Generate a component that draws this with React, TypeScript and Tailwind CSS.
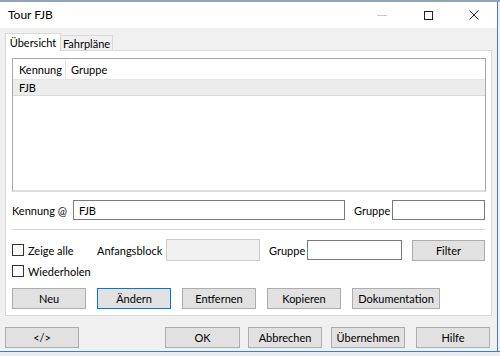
import React from "react";

const font = { fontFamily: 'Lato, "Noto Sans", Arial, sans-serif' };

function Btn({ label, className = "", focused = false }: { label: string; className?: string; focused?: boolean }) {
  return (
    <div
      className={`flex h-[21px] shrink-0 items-center justify-center whitespace-nowrap border bg-[#e1e1e1] text-[11px] leading-none text-black ${
        focused ? "border-[#0078d7]" : "border-[#adadad]"
      } ${className}`}
    >
      {label}
    </div>
  );
}

function Check({ label }: { label: string }) {
  return (
    <div className="flex items-center gap-[4px] whitespace-nowrap">
      <div className="h-[12px] w-[12px] shrink-0 border border-[#333] bg-white" />
      <span className="text-[11px] leading-none">{label}</span>
    </div>
  );
}

export default function App() {
  return (
    <div style={font} className="flex h-[356px] w-[500px] flex-col overflow-hidden whitespace-nowrap bg-[#f0f0f0] text-[11px] text-black">
      <div className="h-[2px] bg-[#8ea3bd]" />
      <div className="flex flex-1 flex-row">
        <div className="flex w-[497px] flex-col">
          {/* title bar */}
          <div className="flex h-[26px] items-center bg-white pl-[8px]">
            <span className="text-[12px] leading-none">Tour FJB</span>
            <div className="ml-auto flex h-full items-center">
              <div className="flex w-[46px] items-center justify-center">
                <div className="h-px w-[10px] bg-[#c8c8c8]" />
              </div>
              <div className="flex w-[46px] items-center justify-center">
                <div className="h-[9px] w-[9px] border border-[#222]" />
              </div>
              <div className="flex w-[46px] items-center justify-center">
                <svg width="10" height="10" viewBox="0 0 10 10">
                  <path d="M0.5 0.5 L9.5 9.5 M9.5 0.5 L0.5 9.5" stroke="#222" strokeWidth="1" />
                </svg>
              </div>
            </div>
          </div>

          {/* body */}
          <div className="flex flex-1 flex-col px-[5px] pt-[5px]">
            {/* tabs */}
            <div className="flex h-[17px] items-end">
              <div className="z-10 -mb-px flex h-[18px] w-[56px] shrink-0 items-center justify-center border border-b-0 border-[#d9d9d9] bg-white leading-none">
                Übersicht
              </div>
              <div className="flex h-[15px] w-[52px] shrink-0 items-center justify-center border border-b-0 border-l-0 border-[#d9d9d9] bg-[#f0f0f0] leading-none">
                Fahrpläne
              </div>
            </div>
            {/* tab panel */}
            <div className="flex h-[266px] w-[487px] flex-col border border-[#d9d9d9] bg-white pl-[6px] pr-[5px] pt-[7px]">
              {/* list */}
              <div className="flex h-[134px] shrink-0 flex-col border border-b-2 border-[#a9a9a9] border-b-[#dcdcdc]">
                <div className="flex h-[21px] items-center border-b border-[#e5e5e5] leading-none">
                  <div className="flex h-full w-[53px] shrink-0 items-center border-r border-[#e5e5e5] pl-[6px]">Kennung</div>
                  <div className="pl-[5px]">Gruppe</div>
                </div>
                <div className="flex h-[16px] items-center border-b border-[#dadada] bg-[#ececec] pl-[6px] leading-none">
                  FJB
                </div>
              </div>

              {/* kennung row */}
              <div className="mt-[8px] flex h-[20px] items-center leading-none">
                <span className="w-[61px] shrink-0">Kennung @</span>
                <div className="flex h-[20px] w-[272px] shrink-0 items-center border border-[#7a7a7a] pl-[5px]">FJB</div>
                <span className="ml-[9px] w-[38px] shrink-0">Gruppe</span>
                <div className="h-[20px] w-[93px] shrink-0 border border-[#7a7a7a]" />
              </div>

              <div className="mt-[9px] h-[2px] w-[473px] border-t border-[#d5d5d5] bg-white" />

              {/* filter row */}
              <div className="mt-[8px] flex h-[22px] items-center leading-none">
                <div className="w-[85px] shrink-0">
                  <Check label="Zeige alle" />
                </div>
                <span className="w-[69px] shrink-0">Anfangsblock</span>
                <div className="h-[22px] w-[94px] shrink-0 border border-[#cccccc] bg-[#f0f0f0]" />
                <span className="ml-[9px] w-[38px] shrink-0">Gruppe</span>
                <div className="h-[20px] w-[95px] shrink-0 border border-[#7a7a7a]" />
                <Btn label="Filter" className="ml-[10px] w-[73px]" />
              </div>
              <div className="mt-[4px]">
                <Check label="Wiederholen" />
              </div>

              {/* action buttons */}
              <div className="mt-[11px] flex gap-[11px]">
                <Btn label="Neu" className="w-[74px]" />
                <Btn label="Ändern" className="w-[74px]" focused />
                <Btn label="Entfernen" className="w-[74px]" />
                <Btn label="Kopieren" className="w-[74px]" />
                <Btn label="Dokumentation" className="w-[88px]" />
              </div>
            </div>

            {/* dialog buttons */}
            <div className="mt-[11px] flex">
              <Btn label="</>" className="w-[74px]" />
              <Btn label="OK" className="ml-[86px] w-[75px]" />
              <Btn label="Abbrechen" className="ml-[8px] w-[74px]" />
              <Btn label="Übernehmen" className="ml-[9px] w-[74px]" />
              <Btn label="Hilfe" className="ml-[11px] w-[74px]" />
            </div>
          </div>
        </div>
        <div className="w-px bg-[#3c7fc4]" />
        <div className="w-[2px] bg-[#f0f0f0]" />
      </div>
      <div className="h-px bg-[#3c7fc4]" />
      <div className="h-[4px] bg-[#e8ecf0]" />
    </div>
  );
}
